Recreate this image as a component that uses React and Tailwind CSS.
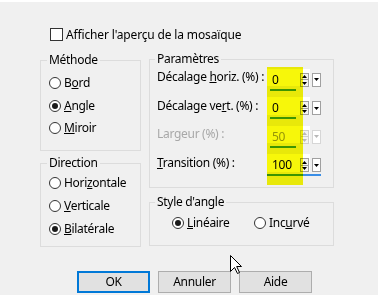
import React from 'react'

function Radio({ checked, children, className = '' }) {
  return (
    <div className={`flex items-center gap-[3px] whitespace-nowrap ${className}`}>
      <span className="w-[12px] h-[12px] shrink-0 rounded-full border border-[#333333] bg-white flex items-center justify-center">
        {checked && <span className="w-[6px] h-[6px] rounded-full bg-[#1a1a1a]" />}
      </span>
      <span>{children}</span>
    </div>
  )
}

function Spin({ disabled }) {
  const c = disabled ? '#b8b8b8' : '#000000'
  const b = disabled ? 'border-[#cfcfcf]' : 'border-[#a0a0a0]'
  return (
    <div className={`flex flex-col w-[9px] h-[14px] border ${b} bg-[#f4f4f4]`}>
      <div className={`flex-1 flex items-center justify-center border-b ${b}`}>
        <svg width="5" height="3" viewBox="0 0 5 3"><path d="M0 3L2.5 0L5 3Z" fill={c} /></svg>
      </div>
      <div className="flex-1 flex items-center justify-center">
        <svg width="5" height="3" viewBox="0 0 5 3"><path d="M0 0L2.5 3L5 0Z" fill={c} /></svg>
      </div>
    </div>
  )
}

function Drop({ disabled }) {
  const c = disabled ? '#b8b8b8' : '#000000'
  return (
    <div className={`w-[9px] h-[14px] ml-[2px] flex items-center justify-center border ${disabled ? 'border-[#d6d6d6]' : 'border-[#a0a0a0]'} bg-white`}>
      <svg width="5" height="3" viewBox="0 0 5 3"><path d="M0 0L2.5 3L5 0Z" fill={c} /></svg>
    </div>
  )
}

function Field({ label, value, disabled, green = 26, focus }) {
  return (
    <div className="flex items-start h-[24.5px]">
      <div className={`w-[110px] h-[22px] flex items-center whitespace-nowrap ${disabled ? 'text-[#a8a8a8]' : ''}`}>
        <span>{label}</span>
      </div>
      <div className="flex flex-col w-[54px]">
        <div className="flex items-center h-[22.5px] pt-[5px]">
          <div className="w-[43px] h-full bg-white flex items-center justify-between pl-[5px] pr-[1px] -mt-[5px] pt-[5px]">
            <span className={disabled ? 'text-[#9a9a9a]' : ''}>{value}</span>
            <Spin disabled={disabled} />
          </div>
          <Drop disabled={disabled} />
        </div>
        <div className="flex h-[2px]">
          <div className={`w-[3px] ${focus ? 'bg-[#3a8ee6]' : ''}`} />
          <div className="bg-[#3e9a0c]" style={{ width: green }} />
          {focus && <div className="flex-1 bg-[#3a8ee6]" />}
        </div>
      </div>
    </div>
  )
}

export default function App() {
  return (
    <div className="relative w-[378px] h-[295px] overflow-hidden bg-[#f0f0f0] border-t-2 border-white text-[12px] leading-[16px] tracking-[-0.3px] text-black font-['Noto_Sans','Liberation_Sans',sans-serif]">
      <div className="flex items-center gap-[3px] ml-[50px] mt-[26px] h-[13px]">
        <span className="w-[13px] h-[13px] border border-[#333333] bg-white" />
        <span className="tracking-[-0.15px]">Afficher l'aperçu de la mosaïque</span>
      </div>

      <div className="flex items-start ml-[40px] mt-[11px] gap-[8px]">
        <div className="flex flex-col gap-[5px] mt-[1px] w-[101px]">
          <fieldset className="border border-[#dcdcdc] pl-[6px] pr-[6px] h-[98px]">
            <legend className="px-[2px] leading-[14px]">Méthode</legend>
            <div className="flex flex-col pt-[5px] ml-[2px]">
              <Radio className="h-[22.5px]">B<u>o</u>rd</Radio>
              <Radio className="h-[22.5px]" checked><u>A</u>ngle</Radio>
              <Radio className="h-[22.5px]"><u>M</u>iroir</Radio>
            </div>
          </fieldset>
          <fieldset className="border border-[#dcdcdc] pl-[6px] pr-[6px] h-[91px]">
            <legend className="px-[2px] leading-[14px]">Direction</legend>
            <div className="flex flex-col pt-[1px] ml-[2px]">
              <Radio className="h-[23px]">Hori<u>z</u>ontale</Radio>
              <Radio className="h-[23px]"><u>V</u>erticale</Radio>
              <Radio className="h-[23px]" checked><u>B</u>ilatérale</Radio>
            </div>
          </fieldset>
        </div>

        <div className="flex flex-col gap-[7px] w-[185px]">
          <fieldset className="border border-[#dcdcdc] pl-[5px] pr-[5px] h-[136px]">
            <legend className="px-[2px] leading-[14px]">Paramètres</legend>
            <div className="flex flex-col gap-[4px] ml-[2px]">
              <Field label={<>Décalage <u>h</u>oriz. (%) :</>} value="0" />
              <Field label={<>Décalage ve<u>r</u>t. (%) :</>} value="0" />
              <Field label={<>Lar<u>g</u>eur (%) :</>} value="50" disabled />
              <Field label={<><u>T</u>ransition (%) :</>} value="100" green={33} focus />
            </div>
          </fieldset>
          <fieldset className="border border-[#dcdcdc] pl-[5px] pr-[5px] h-[51px]">
            <legend className="px-[2px] leading-[14px]">Style d'angle</legend>
            <div className="flex items-center h-[22px] mt-[3px] pl-[17px]">
              <Radio className="w-[82px]" checked><u>L</u>inéaire</Radio>
              <Radio>Inc<u>u</u>rvé</Radio>
            </div>
          </fieldset>
        </div>
      </div>

      <div className="flex gap-[8px] ml-[77px] mt-[24px]">
        <button className="w-[73px] h-[22px] border-2 border-[#0078d7] bg-[#e1e1e1]">OK</button>
        <button className="w-[73px] h-[22px] border border-[#adadad] bg-[#e1e1e1]">Annuler</button>
        <button className="w-[73px] h-[22px] border border-[#adadad] bg-[#e1e1e1]">Aide</button>
      </div>

      <div className="absolute left-[267px] top-[65px] w-[36px] h-[118px] bg-[#f7f70a] mix-blend-multiply" />

      <svg className="absolute left-[230px] top-[253px]" width="13" height="20" viewBox="0 0 13 20">
        <path d="M0.5 0.5L0.5 16.5L4.5 12.5L7.5 18.5L9.5 17.5L6.7 11.5L11.5 11.5Z" fill="#ffffff" stroke="#000000" strokeWidth="1" strokeLinejoin="miter" />
      </svg>
    </div>
  )
}
